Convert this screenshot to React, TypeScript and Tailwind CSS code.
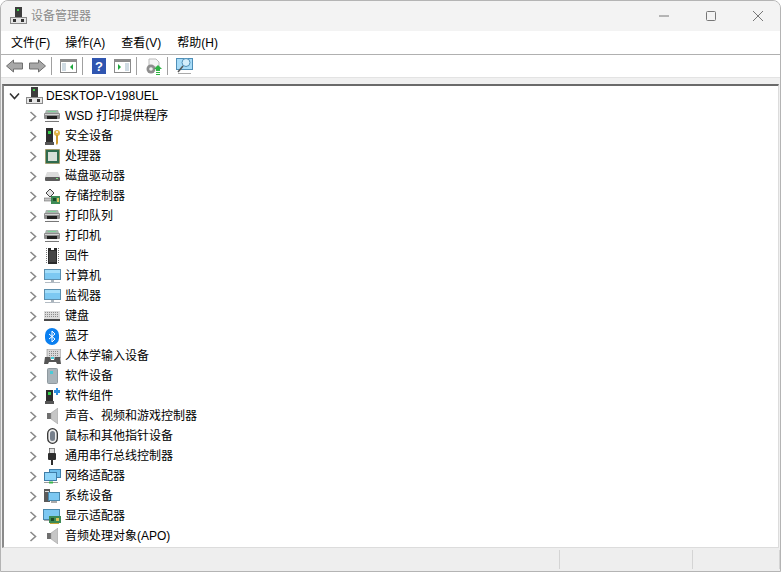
import React from 'react';

const font = "font-['Liberation_Sans','Noto_Sans_CJK_SC',sans-serif]";

function HostIcon() {
  return (
    <svg width="17" height="18" viewBox="0 0 17 18">
      <rect x="5" y="0" width="7" height="10" fill="#3c3c3c" />
      <rect x="7" y="2" width="2" height="2" fill="#3fd04a" />
      <rect x="0" y="10" width="17" height="7" fill="#8a8a8a" />
      <rect x="1" y="11" width="15" height="5" fill="#e6e6e6" />
      <rect x="3" y="12" width="3" height="3" fill="#333" />
      <rect x="11" y="12" width="3" height="3" fill="#333" />
    </svg>
  );
}

function PrinterIcon() {
  return (
    <svg width="16" height="12" viewBox="0 0 16 12">
      <path d="M2 0h12l1 3H1z" fill="#a9b5ae" />
      <rect x="4" y="1" width="8" height="1" fill="#7fd09a" />
      <rect x="0" y="3" width="16" height="6" rx="1" fill="#8c8c8c" />
      <rect x="1" y="4" width="14" height="1" fill="#d2d2d2" />
      <rect x="3" y="6" width="10" height="3" fill="#222" />
      <rect x="3" y="9" width="10" height="2" fill="#f7f7f7" />
      <rect x="1" y="11" width="14" height="1" fill="#777" />
    </svg>
  );
}

function KeyIcon() {
  return (
    <svg width="15" height="17" viewBox="0 0 15 17">
      <rect x="1" y="0" width="7" height="14" fill="#2e2e2e" />
      <rect x="3" y="3" width="3" height="3" fill="#35d04a" />
      <rect x="0" y="14" width="9" height="3" fill="#555" />
      <circle cx="12" cy="5" r="3" fill="#e3b548" />
      <circle cx="12" cy="4" r="1" fill="#fff" />
      <path d="M11 7h2v8l-1 2-1-1z" fill="#cf9a2b" />
    </svg>
  );
}

function CpuIcon() {
  return (
    <svg width="15" height="15" viewBox="0 0 15 15">
      <rect x="0.5" y="0.5" width="14" height="14" fill="#2f6b4e" stroke="#a8873a" strokeDasharray="1 1" />
      <rect x="2" y="2" width="11" height="11" fill="#2f6b4e" />
      <rect x="3" y="3" width="9" height="9" fill="#d8dfd9" />
    </svg>
  );
}

function DiskIcon() {
  return (
    <svg width="15" height="9" viewBox="0 0 15 9">
      <path d="M2 0h11l2 5H0z" fill="#dcdcdc" />
      <rect x="0" y="5" width="15" height="4" rx="1" fill="#5c5c5c" />
      <rect x="11" y="6" width="2" height="1" fill="#7be07f" />
    </svg>
  );
}

function StorageIcon() {
  return (
    <svg width="16" height="16" viewBox="0 0 16 16">
      <path d="M2 5l4-4 4 4-4 4z" fill="#e4e4e4" stroke="#444" />
      <path d="M0 10h8v3H0z" fill="#c4c4c4" stroke="#555" strokeWidth="0.5" />
      <rect x="7" y="8" width="9" height="8" fill="#3d8a55" />
      <rect x="9" y="10" width="3" height="3" fill="#1c4b2b" />
      <rect x="13" y="10" width="2" height="4" fill="#d9c25a" />
    </svg>
  );
}

function ChipIcon() {
  return (
    <svg width="13" height="16" viewBox="0 0 13 16">
      <path d="M0.5 0v16M12.5 0v16" stroke="#777" strokeDasharray="1 1" />
      <path d="M2 0h3v2h3V0h3v16H2z" fill="#2b2b2b" />
      <rect x="3" y="3" width="7" height="11" fill="#454545" />
    </svg>
  );
}

function MonitorIcon() {
  return (
    <svg width="17" height="15" viewBox="0 0 17 15">
      <rect x="0.5" y="0.5" width="16" height="10" fill="#7cc8f2" stroke="#5c8fae" />
      <rect x="1" y="1" width="15" height="3" fill="#a4defa" />
      <rect x="7" y="11" width="3" height="2" fill="#aab4bc" />
      <rect x="1" y="13" width="15" height="1" fill="#b3bcc4" />
    </svg>
  );
}

function KeyboardIcon() {
  return (
    <svg width="16" height="10" viewBox="0 0 16 10">
      <rect x="0" y="0" width="16" height="10" fill="#dcdcdc" />
      <rect x="0" y="8" width="16" height="2" fill="#4a4a4a" />
      <path d="M1 1.5h14M1 3.5h14M1 5.5h14" stroke="#8d8d8d" strokeDasharray="1 1" />
    </svg>
  );
}

function BluetoothIcon() {
  return (
    <svg width="14" height="17" viewBox="0 0 14 17">
      <rect x="0" y="0" width="14" height="17" rx="7" fill="#0a7ff0" />
      <path d="M4 6l6 5-3 3V3l3 3-6 5" fill="none" stroke="#fff" strokeWidth="1" />
    </svg>
  );
}

function HidIcon() {
  return (
    <svg width="17" height="15" viewBox="0 0 17 15">
      <rect x="3" y="0" width="14" height="9" fill="#d9d9d9" stroke="#777" strokeWidth="0.5" />
      <path d="M5 2.5h10M5 4.5h10M5 6.5h10" stroke="#8a8a8a" strokeDasharray="1 1" />
      <path d="M0 15l1-7h5l1 3h3l1-3h5l1 7h-4l-1-2H5l-1 2z" fill="#555" />
      <rect x="7" y="8" width="3" height="2" fill="#49cbd8" />
    </svg>
  );
}

function TowerIcon() {
  return (
    <svg width="11" height="16" viewBox="0 0 11 16">
      <rect x="0.5" y="0.5" width="10" height="15" rx="1" fill="#a9b4ba" stroke="#8f999f" />
      <rect x="3" y="3" width="3" height="3" fill="#49cbd8" />
    </svg>
  );
}

function ComponentIcon() {
  return (
    <svg width="15" height="16" viewBox="0 0 15 16">
      <rect x="1" y="2" width="7" height="11" fill="#2e2e2e" />
      <rect x="3" y="4" width="3" height="3" fill="#35d04a" />
      <rect x="0" y="13" width="9" height="3" fill="#555" />
      <path d="M9 2h2V0h2v2h2v3h-2v2h-2V5H9z" fill="#2f8fe0" />
    </svg>
  );
}

function SpeakerIcon() {
  return (
    <svg width="11" height="16" viewBox="0 0 11 16">
      <rect x="0" y="5" width="4" height="6" fill="#6f6f6f" />
      <path d="M4 5l7-5v16l-7-5z" fill="#c6c6c6" stroke="#999" strokeWidth="0.5" />
    </svg>
  );
}

function MouseIcon() {
  return (
    <svg width="11" height="16" viewBox="0 0 11 16">
      <rect x="0.7" y="0.7" width="9.6" height="14.6" rx="4.8" fill="#eee" stroke="#333" strokeWidth="1.3" />
      <rect x="3" y="3" width="5" height="10" rx="2.5" fill="#77808c" />
    </svg>
  );
}

function UsbIcon() {
  return (
    <svg width="8" height="17" viewBox="0 0 8 17">
      <rect x="1.5" y="0.5" width="5" height="5" fill="#e0e0e0" stroke="#555" strokeWidth="0.7" />
      <rect x="0" y="5" width="8" height="7" rx="1" fill="#2e2e2e" />
      <rect x="3" y="12" width="2" height="5" fill="#2e2e2e" />
    </svg>
  );
}

function NetworkIcon() {
  return (
    <svg width="17" height="15" viewBox="0 0 17 15">
      <rect x="5.5" y="0.5" width="11" height="8" fill="#6fbfec" stroke="#3f7ea8" />
      <rect x="0.5" y="3.5" width="12" height="8" fill="#8ed4f8" stroke="#3f7ea8" />
      <path d="M0 13.5h14" stroke="#9a9a9a" />
      <path d="M5 12.5h4v2H5z" fill="#39b54a" />
    </svg>
  );
}

function SystemIcon() {
  return (
    <svg width="16" height="15" viewBox="0 0 16 15">
      <rect x="0" y="0" width="6" height="13" fill="#5a5a5a" />
      <rect x="1" y="2" width="4" height="1" fill="#ddd" />
      <rect x="4.5" y="3.5" width="11" height="8" fill="#7cc8f2" stroke="#4a88ac" />
      <rect x="7" y="12" width="6" height="2" fill="#aaa" />
    </svg>
  );
}

function DisplayAdapterIcon() {
  return (
    <svg width="18" height="15" viewBox="0 0 18 15">
      <rect x="0.5" y="0.5" width="16" height="10" fill="#7cc8f2" stroke="#4a88ac" />
      <rect x="1" y="11" width="10" height="1" fill="#aaa" />
      <rect x="6" y="7" width="12" height="7" fill="#3d8a55" />
      <rect x="8" y="9" width="3" height="3" fill="#1c4b2b" />
      <rect x="13" y="9" width="3" height="3" fill="#d9c25a" />
      <path d="M7 14h9v1H7z" fill="#c9a83a" />
    </svg>
  );
}

function Expander() {
  return (
    <svg width="8" height="11" viewBox="0 0 8 11">
      <path d="M1.5 1l5 4.5-5 4.5" fill="none" stroke="#8a8a8a" strokeWidth="1.6" />
    </svg>
  );
}

function Collapser() {
  return (
    <svg width="11" height="8" viewBox="0 0 11 8">
      <path d="M1 1.5l4.5 5 4.5-5" fill="none" stroke="#333" strokeWidth="1.6" />
    </svg>
  );
}

const rows: { label: string; icon: React.ReactNode }[] = [
  { label: 'WSD 打印提供程序', icon: <PrinterIcon /> },
  { label: '安全设备', icon: <KeyIcon /> },
  { label: '处理器', icon: <CpuIcon /> },
  { label: '磁盘驱动器', icon: <DiskIcon /> },
  { label: '存储控制器', icon: <StorageIcon /> },
  { label: '打印队列', icon: <PrinterIcon /> },
  { label: '打印机', icon: <PrinterIcon /> },
  { label: '固件', icon: <ChipIcon /> },
  { label: '计算机', icon: <MonitorIcon /> },
  { label: '监视器', icon: <MonitorIcon /> },
  { label: '键盘', icon: <KeyboardIcon /> },
  { label: '蓝牙', icon: <BluetoothIcon /> },
  { label: '人体学输入设备', icon: <HidIcon /> },
  { label: '软件设备', icon: <TowerIcon /> },
  { label: '软件组件', icon: <ComponentIcon /> },
  { label: '声音、视频和游戏控制器', icon: <SpeakerIcon /> },
  { label: '鼠标和其他指针设备', icon: <MouseIcon /> },
  { label: '通用串行总线控制器', icon: <UsbIcon /> },
  { label: '网络适配器', icon: <NetworkIcon /> },
  { label: '系统设备', icon: <SystemIcon /> },
  { label: '显示适配器', icon: <DisplayAdapterIcon /> },
  { label: '音频处理对象(APO)', icon: <SpeakerIcon /> },
];

const menus = ['文件(F)', '操作(A)', '查看(V)', '帮助(H)'];

function Sep() {
  return <div className="h-[18px] w-px bg-[#a0a0a0]" />;
}

function PaneIcon({ right }: { right?: boolean }) {
  return (
    <svg width="17" height="14" viewBox="0 0 17 14">
      <rect x="0.5" y="0.5" width="16" height="13" fill="#fff" stroke="#8a8a8a" />
      <rect x="0" y="0" width="17" height="3" fill="#8c8c8c" />
      <rect x={right ? 11 : 2} y="4" width="4" height="8" fill="#cfdbe3" />
      <path d={right ? 'M4 5v6l3-3z' : 'M13 5v6l-3-3z'} fill="#1ea73c" />
    </svg>
  );
}

export default function App() {
  return (
    <div className={`flex h-[572px] w-[781px] flex-col overflow-hidden rounded-t-lg border border-[#b4b4b4] bg-[#f0f0f0] text-[12px] text-black ${font}`}>
      {/* Title bar */}
      <div className="flex h-[30px] shrink-0 items-center bg-[#f3f3f3] pl-[9px]">
        <HostIcon />
        <span className="ml-[4px] text-[#8b8b8b]">设备管理器</span>
        <div className="ml-auto flex items-center pr-[16px]">
          <svg width="12" height="12" viewBox="0 0 12 12" className="mr-[35px]"><path d="M1 6h10" stroke="#777" /></svg>
          <svg width="12" height="12" viewBox="0 0 12 12" className="mr-[35px]"><rect x="1.5" y="1.5" width="9" height="9" rx="1" fill="none" stroke="#777" /></svg>
          <svg width="12" height="12" viewBox="0 0 12 12"><path d="M1 1l10 10M11 1L1 11" stroke="#777" /></svg>
        </div>
      </div>

      {/* Menu bar */}
      <div className="flex h-[24px] shrink-0 items-center gap-[16px] border-b border-[#b0b0b0] bg-white pl-[10px]">
        {menus.map((m) => (
          <span key={m} className="first:mr-[-1px]">{m}</span>
        ))}
      </div>

      {/* Toolbar */}
      <div className="flex h-[23px] shrink-0 items-center border-b border-[#e3e3e3] bg-white pl-[5px]">
        <svg width="17" height="14" viewBox="0 0 17 14"><path d="M0.5 7l7-6v3h9v6h-9v3z" fill="#a8a8a8" stroke="#6f6f6f" /></svg>
        <svg width="17" height="14" viewBox="0 0 17 14" className="ml-[6px]"><path d="M16.5 7l-7-6v3h-9v6h9v3z" fill="#a8a8a8" stroke="#6f6f6f" /></svg>
        <div className="ml-[5px]"><Sep /></div>
        <div className="ml-[8px]"><PaneIcon /></div>
        <div className="ml-[5px]"><Sep /></div>
        <svg width="14" height="16" viewBox="0 0 14 16" className="ml-[9px]">
          <rect width="14" height="16" fill="#2f55b0" />
          <text x="7" y="13" textAnchor="middle" fontSize="13" fontWeight="bold" fill="#fff" fontFamily="Liberation Sans">?</text>
        </svg>
        <div className="ml-[8px]"><PaneIcon right /></div>
        <div className="ml-[5px]"><Sep /></div>
        <svg width="18" height="17" viewBox="0 0 18 17" className="ml-[8px]">
          <path d="M4 1h7l3 3v5H4z" fill="#f4f4f4" stroke="#bbb" />
          <circle cx="6" cy="11" r="4.5" fill="#8e8e8e" />
          <circle cx="6" cy="11" r="1.8" fill="#eee" />
          <path d="M13 7l4 4h-2v2h-4v-2H9z" fill="#2fb344" />
          <rect x="11" y="14" width="4" height="1" fill="#2fb344" />
          <rect x="11" y="16" width="4" height="1" fill="#2fb344" />
        </svg>
        <div className="ml-[4px]"><Sep /></div>
        <svg width="17" height="17" viewBox="0 0 17 17" className="ml-[8px]">
          <rect x="0.5" y="0.5" width="16" height="11" fill="#a8dcf8" stroke="#4f8fb8" />
          <circle cx="10" cy="4.5" r="4" fill="#d4eefc" stroke="#4f8fb8" />
          <path d="M7 8l-5 6" stroke="#555" strokeWidth="1.5" />
          <rect x="2" y="15" width="13" height="1" fill="#aaa" />
        </svg>
      </div>

      {/* Tree */}
      <div className="mx-[1px] mt-[6px] flex min-h-0 flex-1 flex-col border-t-2 border-r border-b border-l-2 border-t-[#6a6a6a] border-r-[#dcdcdc] border-b-[#dcdcdc] border-l-[#8a8a8a] bg-white">
        <div className="flex h-[20px] shrink-0 items-center pl-[5px]">
          <Collapser />
          <div className="ml-[6px] flex w-[17px] justify-center"><HostIcon /></div>
          <span className="ml-[3px]">DESKTOP-V198UEL</span>
        </div>
        {rows.map((r) => (
          <div key={r.label} className="flex h-[20px] shrink-0 items-center pl-[25px]">
            <Expander />
            <div className="ml-[5px] flex w-[20px] justify-center">{r.icon}</div>
            <span className="ml-[3px]">{r.label}</span>
          </div>
        ))}
      </div>

      {/* Status bar */}
      <div className="flex h-[23px] shrink-0 items-stretch bg-[#eeeeee] py-[2px]">
        <div className="flex-1" />
        <div className="w-[133px] border-l border-[#d4d4d4]" />
        <div className="w-[88px] border-r border-l border-[#d4d4d4]" />
      </div>
    </div>
  );
}
